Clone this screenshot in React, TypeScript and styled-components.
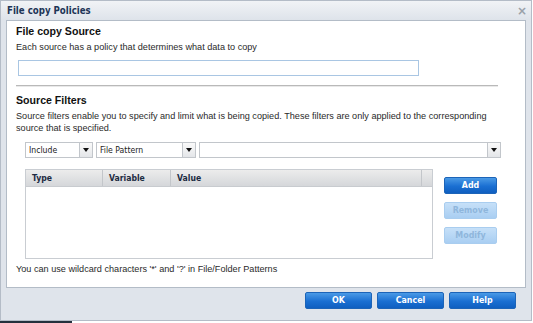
import React from "react";
import styled, { createGlobalStyle } from "styled-components";

const GlobalStyle = createGlobalStyle`
  html, body {
    margin: 0;
    padding: 0;
    background: #ffffff;
  }
  body {
    font-family: "Liberation Sans", Arial, sans-serif;
  }
`;

const Dialog = styled.div`
  width: 532px;
  height: 321px;
  box-sizing: border-box;
  border: 1px solid #b4bcc7;
  background: #dfe4eb;
  display: flex;
  flex-direction: column;
`;

const TitleBar = styled.div`
  height: 19px;
  flex: none;
  display: flex;
  align-items: center;
  justify-content: space-between;
  padding: 0 6px;
  background: linear-gradient(#f1f3f6, #dee3ea);
`;

const Title = styled.span`
  font-family: "DejaVu Sans Condensed", "DejaVu Sans", sans-serif;
  font-weight: bold;
  font-size: 9.6px;
  color: #1d3556;
`;

const Close = styled.span`
  font-family: "DejaVu Sans", sans-serif;
  font-size: 12px;
  font-weight: bold;
  color: #9aa1a9;
  line-height: 1;
  margin-right: -2px;
`;

const Body = styled.div`
  flex: none;
  padding: 0 5px 0 5px;
`;

const Panel = styled.div`
  height: 268px;
  box-sizing: border-box;
  border: 1px solid #b3bcc7;
  background: #ffffff;
  padding: 3px 9px 0 9px;
  display: flex;
  flex-direction: column;
  color: #1a1a1a;
`;

const Heading = styled.div<{ $top?: number }>`
  font-size: 10.6px;
  font-weight: bold;
  line-height: 14px;
  color: #111111;
  margin-top: ${(p) => p.$top ?? 0}px;
`;

const Text = styled.div<{ $top?: number }>`
  font-size: 9.15px;
  line-height: 12px;
  color: #2a2a2a;
  margin-top: ${(p) => p.$top ?? 0}px;
`;

const SourceInput = styled.div`
  width: 401px;
  height: 16px;
  box-sizing: border-box;
  margin: 7px 0 0 2px;
  border: 1px solid #a9c6e3;
  background: #ffffff;
`;

const Separator = styled.div`
  width: 482px;
  height: 2px;
  margin-top: 9px;
  border-top: 1px solid #b9b9b9;
  border-bottom: 1px solid #e9e9e9;
  box-sizing: border-box;
`;

const FilterRow = styled.div`
  display: flex;
  gap: 3px;
  margin: 8px 0 0 9px;
`;

const Select = styled.div<{ $w: number }>`
  width: ${(p) => p.$w}px;
  height: 16px;
  box-sizing: border-box;
  border: 1px solid #c2c6cb;
  display: flex;
  background: #ffffff;
`;

const SelectValue = styled.span`
  flex: 1;
  font-family: "DejaVu Sans Condensed", "DejaVu Sans", sans-serif;
  font-size: 8.6px;
  line-height: 14px;
  padding-left: 3px;
  color: #222222;
`;

const SelectArrow = styled.span`
  width: 12px;
  border-left: 1px solid #c2c6cb;
  background: linear-gradient(#fafafa, #e4e6e9);
  display: flex;
  align-items: center;
  justify-content: center;
  &::after {
    content: "";
    border-left: 3px solid transparent;
    border-right: 3px solid transparent;
    border-top: 4px solid #111111;
  }
`;

const TableArea = styled.div`
  display: flex;
  margin: 11px 0 0 9px;
  gap: 11px;
`;

const Table = styled.div`
  width: 408px;
  height: 90px;
  box-sizing: border-box;
  border: 1px solid #c9cdd2;
  background: #ffffff;
`;

const HeaderRow = styled.div`
  display: flex;
  height: 17px;
  background: linear-gradient(#ececec, #d5d7da);
  border-bottom: 1px solid #c8cbcf;
  box-sizing: border-box;
`;

const HeaderCell = styled.div<{ $w: number; $last?: boolean }>`
  width: ${(p) => p.$w}px;
  flex: none;
  box-sizing: border-box;
  border-right: ${(p) => (p.$last ? "none" : "1px solid #c3c6ca")};
  font-family: "DejaVu Sans Condensed", "DejaVu Sans", sans-serif;
  font-weight: bold;
  font-size: 8.6px;
  line-height: 16px;
  padding-left: 6px;
  color: #1c2b42;
`;

const SideButtons = styled.div`
  display: flex;
  flex-direction: column;
  padding-top: 8px;
  gap: 8px;
`;

const Button = styled.div<{ $w: number; $disabled?: boolean }>`
  width: ${(p) => p.$w}px;
  height: 17px;
  box-sizing: border-box;
  border-radius: 2px;
  border: 1px solid ${(p) => (p.$disabled ? "#a9cdef" : "#1c64b8")};
  background: ${(p) =>
    p.$disabled
      ? "linear-gradient(#c6e0f8, #a9cef2)"
      : "linear-gradient(#4a9ae6, #1a6fd2 55%, #0f5fc0)"};
  color: ${(p) => (p.$disabled ? "#8fb6dc" : "#ffffff")};
  font-family: "DejaVu Sans Condensed", "DejaVu Sans", sans-serif;
  font-weight: bold;
  font-size: 8.8px;
  line-height: 15px;
  text-align: center;
`;

const Footer = styled.div`
  flex: 1;
  display: flex;
  justify-content: flex-end;
  align-items: flex-start;
  gap: 5px;
  padding: 4px 15px 0 0;
`;

const Strip = styled.div`
  width: 72px;
  height: 2px;
  background: #24303d;
`;

export default function App() {
  return (
    <>
      <GlobalStyle />
      <Dialog>
        <TitleBar>
          <Title>File copy Policies</Title>
          <Close>×</Close>
        </TitleBar>
        <Body>
          <Panel>
            <Heading>File copy Source</Heading>
            <Text $top={3}>Each source has a policy that determines what data to copy</Text>
            <SourceInput />
            <Separator />
            <Heading $top={6}>Source Filters</Heading>
            <Text $top={3}>
              Source filters enable you to specify and limit what is being copied. These filters are only applied to the corresponding
              <br />
              source that is specified.
            </Text>
            <FilterRow>
              <Select $w={68}>
                <SelectValue>Include</SelectValue>
                <SelectArrow />
              </Select>
              <Select $w={100}>
                <SelectValue>File Pattern</SelectValue>
                <SelectArrow />
              </Select>
              <Select $w={302}>
                <SelectValue />
                <SelectArrow />
              </Select>
            </FilterRow>
            <TableArea>
              <Table>
                <HeaderRow>
                  <HeaderCell $w={77}>Type</HeaderCell>
                  <HeaderCell $w={68}>Variable</HeaderCell>
                  <HeaderCell $w={251}>Value</HeaderCell>
                  <HeaderCell $w={10} $last />
                </HeaderRow>
              </Table>
              <SideButtons>
                <Button $w={53}>Add</Button>
                <Button $w={53} $disabled>Remove</Button>
                <Button $w={53} $disabled>Modify</Button>
              </SideButtons>
            </TableArea>
            <Text $top={4}>You can use wildcard characters '*' and '?' in File/Folder Patterns</Text>
          </Panel>
        </Body>
        <Footer>
          <Button $w={67}>OK</Button>
          <Button $w={67}>Cancel</Button>
          <Button $w={67}>Help</Button>
        </Footer>
      </Dialog>
      <Strip />
    </>
  );
}
